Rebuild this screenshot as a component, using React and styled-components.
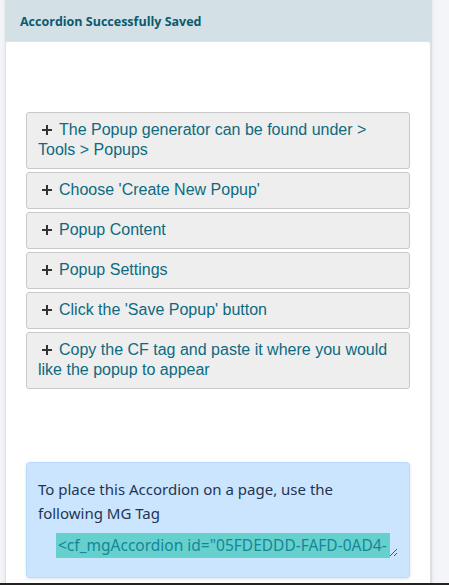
import React from "react";
import styled, { createGlobalStyle } from "styled-components";

const GlobalStyle = createGlobalStyle`
  html, body {
    margin: 0;
    padding: 0;
    background-color: #f4f5f9;
  }
  body {
    font-family: "Noto Sans", "Open Sans", sans-serif;
  }
`;

const Page = styled.div`
  width: 449px;
  height: 585px;
  overflow: hidden;
  box-sizing: border-box;
  padding-left: 5px;
  border-bottom: 2px solid #222;
`;

const Card = styled.div`
  width: 427px;
  height: 600px;
  background-color: #d3e0e6;
  box-shadow: 0 0 4px rgba(0, 0, 0, 0.08);
  display: flex;
  flex-direction: column;
`;

const Header = styled.div`
  height: 41px;
  box-sizing: border-box;
  padding: 13px 15px 0;
  font-family: "Open Sans", sans-serif;
  font-size: 12.5px;
  font-weight: 700;
  color: #0b5a6c;
`;

const Body = styled.div`
  flex: 1;
  margin: 0 1px 0 0;
  background-color: #ffffff;
  border: 1px solid #dde3e7;
  border-bottom: none;
  border-radius: 3px 3px 0 0;
  padding: 70px 20px 0;
  display: flex;
  flex-direction: column;
`;

const Accordion = styled.div`
  display: flex;
  flex-direction: column;
  gap: 3px;
`;

const Item = styled.div`
  background-color: #eeeeee;
  border: 1px solid #c9c9c9;
  border-radius: 3px;
  padding: 7px 12px 8px 11px;
  font-family: "Liberation Sans", Arial, sans-serif;
  font-size: 16px;
  line-height: 20px;
  color: #0d6a80;
`;

const Plus = styled.span`
  display: inline-block;
  width: 10px;
  height: 10px;
  margin: 0 7px 0 4px;
  position: relative;
  &::before,
  &::after {
    content: "";
    position: absolute;
    background-color: #333333;
  }
  &::before {
    left: 0;
    top: 3.75px;
    width: 10px;
    height: 2.5px;
  }
  &::after {
    left: 3.75px;
    top: 0;
    width: 2.5px;
    height: 10px;
  }
`;

const Alert = styled.div`
  margin-top: 73px;
  background-color: #cce5ff;
  border: 1px solid #b8daff;
  border-radius: 4px;
  padding: 14px 11px 19px;
  color: #1f3552;
  font-size: 15px;
  line-height: 24px;
  box-shadow: 0 1px 3px rgba(0, 0, 0, 0.12);
`;

const TagBox = styled.div`
  margin: 8px 0 0 18px;
  height: 25px;
  position: relative;
  display: flex;
  align-items: center;
`;

const Selected = styled.span`
  background-color: #66d0cc;
  color: #14869a;
  font-size: 15.5px;
  line-height: 25px;
  padding: 0 3px 0 2px;
  white-space: nowrap;
`;

const Grip = styled.svg`
  position: absolute;
  right: 0;
  bottom: 1px;
`;

const steps = [
  "The Popup generator can be found under > Tools > Popups",
  "Choose 'Create New Popup'",
  "Popup Content",
  "Popup Settings",
  "Click the 'Save Popup' button",
  "Copy the CF tag and paste it where you would like the popup to appear",
];

const App = () => {
  return (
    <>
      <GlobalStyle />
      <Page>
        <Card>
          <Header>Accordion Successfully Saved</Header>
          <Body>
            <Accordion>
              {steps.map((s) => (
                <Item key={s}>
                  <Plus />
                  {s}
                </Item>
              ))}
            </Accordion>
            <Alert>
              To place this Accordion on a page, use the following MG Tag
              <TagBox>
                <Selected>&lt;cf_mgAccordion id="05FDEDDD-FAFD-0AD4-</Selected>
                <Grip width="9" height="9" viewBox="0 0 9 9">
                  <path d="M1 8 L8 1 M5 8 L8 5" stroke="#555" strokeWidth="1" />
                </Grip>
              </TagBox>
            </Alert>
          </Body>
        </Card>
      </Page>
    </>
  );
};

export default App;
